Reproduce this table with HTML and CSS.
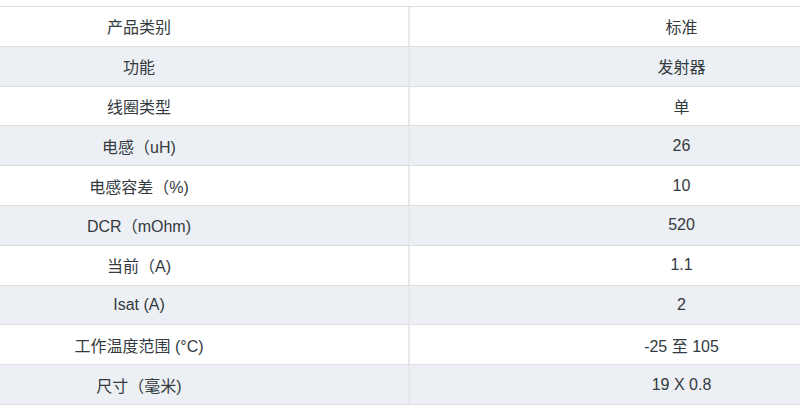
FILE: index.html
```html
<!DOCTYPE html>
<html lang="zh">
<head>
<meta charset="utf-8">
<link rel="stylesheet" href="styles.css">
</head>
<body>
<div class="viewport">
  <div class="spec-table">
    <div class="row"><div class="cell">产品类别</div><div class="cell">标准</div></div>
    <div class="row alt"><div class="cell">功能</div><div class="cell">发射器</div></div>
    <div class="row"><div class="cell">线圈类型</div><div class="cell">单</div></div>
    <div class="row alt"><div class="cell">电感（uH)</div><div class="cell">26</div></div>
    <div class="row"><div class="cell">电感容差（%)</div><div class="cell">10</div></div>
    <div class="row alt"><div class="cell">DCR（mOhm)</div><div class="cell">520</div></div>
    <div class="row"><div class="cell">当前（A)</div><div class="cell">1.1</div></div>
    <div class="row alt"><div class="cell">Isat (A)</div><div class="cell">2</div></div>
    <div class="row"><div class="cell">工作温度范围 (°C)</div><div class="cell">-25 至 105</div></div>
    <div class="row alt"><div class="cell">尺寸（毫米)</div><div class="cell">19 X 0.8</div></div>
  </div>
</div>
</body>
</html>
```
FILE: styles.css
```css
html, body {
  margin: 0;
  padding: 0;
  background: #ffffff;
}
.viewport {
  width: 800px;
  height: 414px;
  overflow: hidden;
  padding-top: 6px;
  box-sizing: border-box;
}
.spec-table {
  margin-left: -130px;
  width: 1083px;
  border-top: 1px solid #dedede;
  font-family: "Liberation Sans", "Noto Sans CJK SC", Arial, sans-serif;
  font-size: 16px;
  color: #333a40;
}
.row {
  display: grid;
  grid-template-columns: 540px 543px;
  height: 39.8px;
  box-sizing: border-box;
  border-bottom: 1px solid #dedede;
}
.row.alt {
  background: #eceff3;
}
.cell {
  display: flex;
  align-items: center;
  justify-content: center;
}
.cell:first-child {
  border-right: 2px solid #e6e8eb;
}
```
